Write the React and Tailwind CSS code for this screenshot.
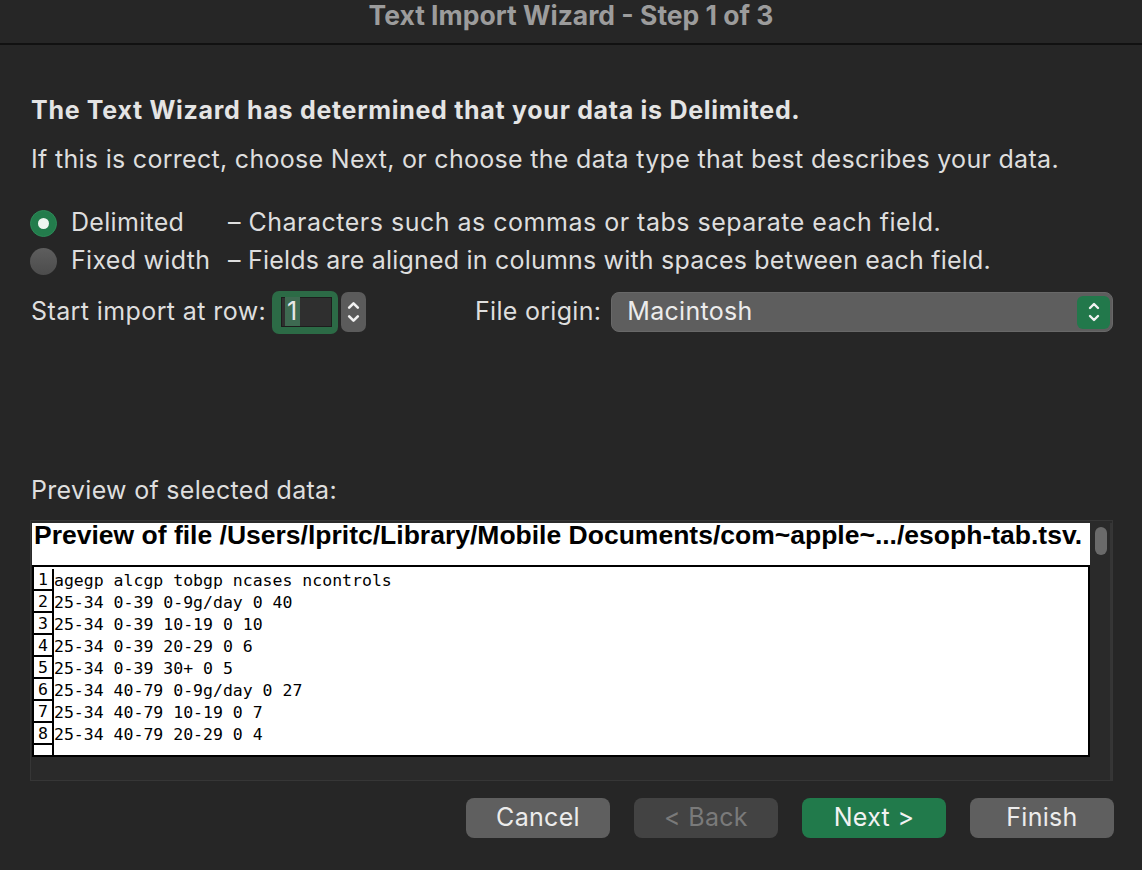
import React from 'react'

const rows = [
  'agegp alcgp tobgp ncases ncontrols',
  '25-34 0-39 0-9g/day 0 40',
  '25-34 0-39 10-19 0 10',
  '25-34 0-39 20-29 0 6',
  '25-34 0-39 30+ 0 5',
  '25-34 40-79 0-9g/day 0 27',
  '25-34 40-79 10-19 0 7',
  '25-34 40-79 20-29 0 4',
]

function Chevrons({ w = 12, h = 26, sw = 2.4 }) {
  return (
    <svg width={w} height={h} viewBox="0 0 12 26" fill="none" stroke="#f2f2f2" strokeWidth={sw} strokeLinecap="round" strokeLinejoin="round">
      <path d="M2 9 L6 5 L10 9" />
      <path d="M2 17 L6 21 L10 17" />
    </svg>
  )
}

function Radio({ checked }) {
  return checked ? (
    <div className="w-[27px] h-[27px] rounded-full bg-[#237c4c] border border-[#2d8a58] flex items-center justify-center shrink-0">
      <div className="w-[11px] h-[11px] rounded-full bg-[#eef5f0]" />
    </div>
  ) : (
    <div className="w-[27px] h-[27px] rounded-full bg-gradient-to-b from-[#5e5e5e] to-[#4c4c4c] shrink-0" />
  )
}

function Button({ children, variant }) {
  const cls = {
    gray: 'bg-[#5f5f5f] text-[#ececec]',
    disabled: 'bg-[#434343] text-[#7a7a7a]',
    green: 'bg-[#217a4b] text-[#f2f2f2]',
  }[variant]
  return (
    <div className={'w-[144px] h-[40px] rounded-[8px] flex items-center justify-center text-[25px] tracking-[0.3px] ' + cls}>
      {children}
    </div>
  )
}

export default function App() {
  return (
    <div className="w-[1142px] h-[870px] bg-[#262626] text-[#dedede] font-['Inter','Liberation_Sans',sans-serif] overflow-hidden">
      <div className="h-[45px] border-b-2 border-[#111] flex justify-center">
        <div className="text-[#9c9c9c] font-bold text-[26.5px] leading-[30px]">Text Import Wizard - Step 1 of 3</div>
      </div>

      <div className="pl-[31px] pr-[29px] text-[25px] tracking-[0.3px]">
        <p className="mt-[49px] font-bold leading-[32px] tracking-[0.7px] text-[#e4e4e4]">The Text Wizard has determined that your data is Delimited.</p>
        <p className="mt-[17px] leading-[32px]">If this is correct, choose Next, or choose the data type that best describes your data.</p>

        <div className="mt-[29px]">
          <div className="h-[38px] flex items-center">
            <div className="-ml-px"><Radio checked /></div>
            <span className="ml-[14px] w-[157px]">Delimited</span>
            <span className="tracking-[0.5px]">– Characters such as commas or tabs separate each field.</span>
          </div>
          <div className="h-[38px] flex items-center">
            <div className="-ml-px"><Radio /></div>
            <span className="ml-[14px] w-[157px]">Fixed width</span>
            <span className="tracking-[0.2px]">– Fields are aligned in columns with spaces between each field.</span>
          </div>
        </div>

        <div className="mt-[12px] h-[40px] flex items-center">
          <div className="w-[444px] flex items-center">
            <span className="tracking-[0.4px]">Start import at row:</span>
            <div className="ml-[6px] w-[66px] h-[43px] rounded-[7px] bg-[#2c6b46] pl-[9px] pr-[6px] pt-[6px] pb-[7px]">
              <div className="w-full h-full bg-[#2f2f2f] border border-[#1d1d1d] flex items-center pl-[3px]">
                <span className="bg-[#3e6a51] px-[2px] leading-[29px] text-[#e8e8e8]">1</span>
              </div>
            </div>
            <div className="ml-[3px] w-[25px] h-[40px] rounded-[7px] bg-[#5b5b5b] flex items-center justify-center">
              <Chevrons w={13} h={30} sw={2.4} />
            </div>
          </div>
          <span>File origin:</span>
          <div className="ml-[10px] flex-1 h-[40px] rounded-[8px] bg-[#5e5e5e] border border-[#686868] flex items-center pl-[15px] pr-[2px]">
            <span className="flex-1 text-[#ececec]">Macintosh</span>
            <div className="w-[33px] h-[33px] rounded-[6px] bg-[#22784b] flex items-center justify-center">
              <Chevrons />
            </div>
          </div>
        </div>

        <p className="mt-[142px] leading-[32px]">Preview of selected data:</p>

        <div className="mt-[14px] -ml-px h-[261px] border border-[#363636] bg-[#2a2a2a] flex pl-px pt-[2px] tracking-normal">
          <div className="w-[1058px] flex flex-col">
            <div className="h-[42px] bg-white text-black font-bold text-[26.5px] font-['Liberation_Sans',sans-serif] pl-[2px] leading-[24px]">
              Preview of file /Users/lpritc/Library/Mobile Documents/com~apple~.../esoph-tab.tsv.
            </div>
            <div className="h-[192px] bg-white border-2 border-black text-black font-['DejaVu_Sans_Mono',monospace] text-[16.5px] flex flex-col pt-[2px]">
              {rows.map((r, i) => (
                <div key={i} className="h-[22px] flex items-center">
                  <div className="w-[20px] h-full border-r-2 border-b-2 border-black flex items-center justify-center shrink-0 pt-[2px]">{i + 1}</div>
                  <span className="whitespace-pre pt-[2px]">{r}</span>
                </div>
              ))}
              <div className="w-[20px] flex-1 border-r-2 border-black" />
            </div>
          </div>
          <div className="flex-1 flex justify-center pt-[4px] pl-px border-r-2 border-[#353535]">
            <div className="w-[12px] h-[28px] rounded-full bg-[#6a6a6a]" />
          </div>
        </div>

        <div className="mt-[17px] flex justify-end gap-[24px] -mr-px">
          <Button variant="gray">Cancel</Button>
          <Button variant="disabled">&lt; Back</Button>
          <Button variant="green">Next &gt;</Button>
          <Button variant="gray">Finish</Button>
        </div>
      </div>
    </div>
  )
}
